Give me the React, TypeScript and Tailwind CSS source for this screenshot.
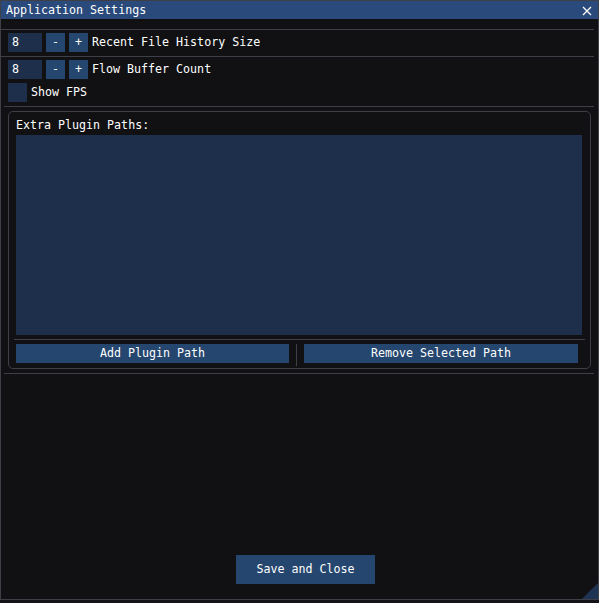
import React from "react";

const font = { fontFamily: '"DejaVu Sans Mono", "Liberation Mono", monospace' };

function Sep({ className = "" }: { className?: string }) {
  return <div className={"h-px bg-[#3f3f47] shrink-0 " + className} />;
}

function Btn({ label, className = "" }: { label: string; className?: string }) {
  return (
    <div className={"flex items-center justify-center bg-[#25466e] text-white " + className}>
      {label}
    </div>
  );
}

function StepRow({ label }: { label: string }) {
  return (
    <div className="flex items-center h-[19px] ml-[7px] shrink-0">
      <div className="w-[34px] h-[19px] bg-[#1d2f4a] flex items-center pl-[4px] text-white">8</div>
      <Btn label="-" className="w-[19px] h-[19px] ml-[4px]" />
      <Btn label="+" className="w-[19px] h-[19px] ml-[4px]" />
      <span className="ml-[4px] text-white">{label}</span>
    </div>
  );
}

export default function App() {
  return (
    <div className="w-[599px] h-[603px] bg-[#141418] text-[11.65px] leading-[13px]" style={font}>
      <div className="relative flex flex-col w-[599px] h-[600px] border border-[#3f3f47] bg-[#111114] overflow-hidden">
        {/* title bar */}
        <div className="flex items-center justify-between h-[18px] bg-[#294a7a] pl-[5px] pr-[6px] shrink-0 text-white">
          <span>Application Settings</span>
          <svg width="10" height="10" viewBox="0 0 10 10" className="mt-[1px]">
            <path d="M1 1 L9 9 M9 1 L1 9" stroke="#ffffff" strokeWidth="1.3" />
          </svg>
        </div>

        <Sep className="mt-[10px] mr-[4px]" />
        <div className="mt-[3px]"><StepRow label="Recent File History Size" /></div>
        <Sep className="mt-[4px] mr-[4px]" />
        <div className="mt-[3px]"><StepRow label="Flow Buffer Count" /></div>
        <div className="flex items-center h-[19px] ml-[7px] mt-[4px] shrink-0">
          <div className="w-[19px] h-[19px] bg-[#1d2f4a]" />
          <span className="ml-[4px] text-white">Show FPS</span>
        </div>
        <Sep className="mt-[4px] ml-[3px] mr-[4px]" />

        {/* child region */}
        <div className="mt-[4px] ml-[7px] mr-[7px] h-[258px] border border-[#3f3f47] rounded-[5px] flex flex-col px-[7px] pt-[7px] shrink-0">
          <div className="text-white h-[13px]">Extra Plugin Paths:</div>
          <div className="mt-[3px] h-[200px] w-[566px] bg-[#1d2f4a]" />
          <Sep className="mt-[4px] -ml-[2px] -mr-[2px]" />
          <div className="flex items-center mt-[4px] h-[19px]">
            <Btn label="Add Plugin Path" className="w-[273px] h-[19px]" />
            <div className="w-px h-[22px] bg-[#3f3f47] ml-[7px] mt-[3px]" />
            <Btn label="Remove Selected Path" className="w-[274px] h-[19px] ml-[7px]" />
          </div>
        </div>

        <Sep className="mt-[4px] ml-[3px] mr-[4px]" />

        <div className="flex-1" />
        <div className="flex justify-center mb-[15px] shrink-0">
          <Btn label="Save and Close" className="w-[139px] h-[29px] ml-[12px]" />
        </div>

        {/* resize grip */}
        <svg width="16" height="16" viewBox="0 0 16 16" className="absolute right-0 bottom-0">
          <path d="M16 0 L16 16 L0 16 Z" fill="#1f3452" />
        </svg>
      </div>
    </div>
  );
}
